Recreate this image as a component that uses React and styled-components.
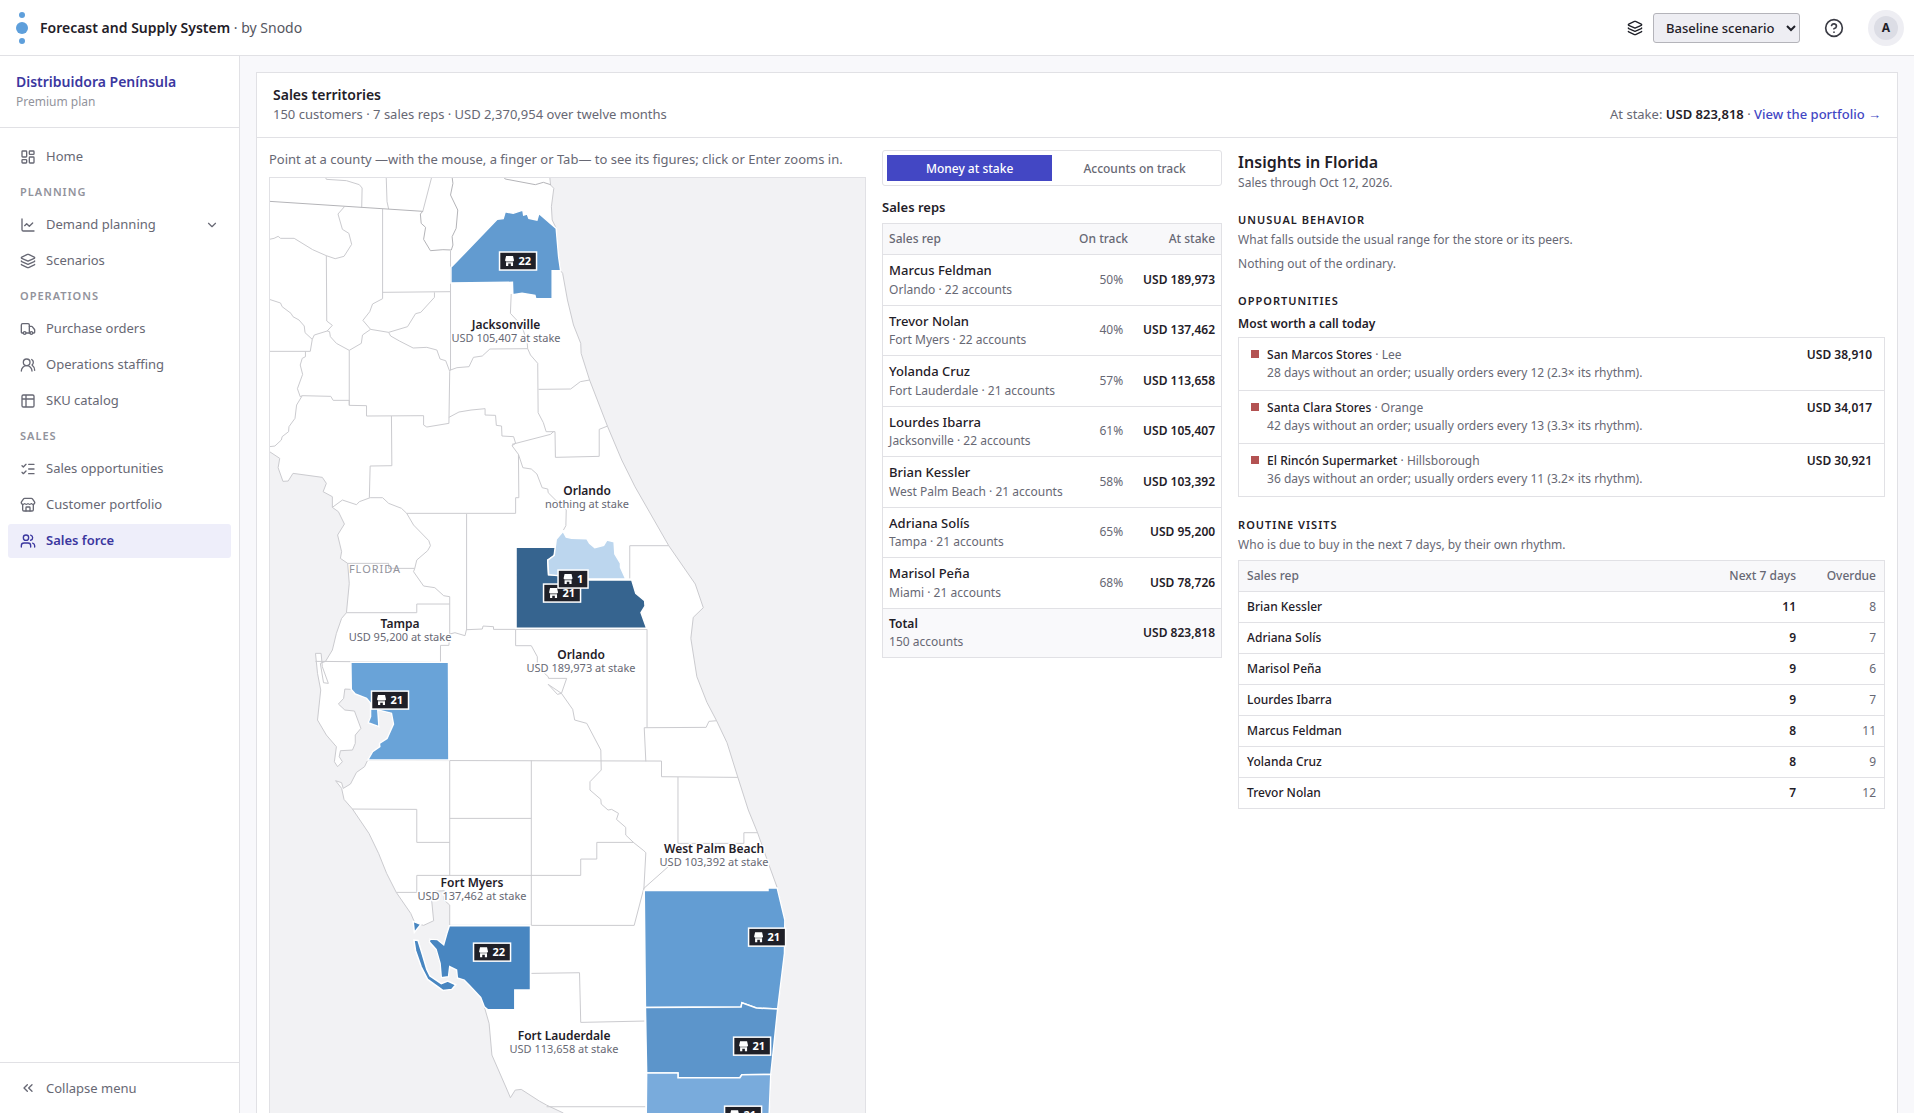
import React, { useState } from 'react'

import styled, { createGlobalStyle } from 'styled-components'

import {
  ChartLine,
  ChevronDown,
  ChevronsLeft,
  CircleQuestionMark,
  Layers,
  LayoutDashboard,
  ListChecks,
  Store,
  Truck,
  Users,
  UsersRound,
} from 'lucide-react'

const ink = '#1f2028'
const muted = '#676874'
const faint = '#92939c'
const line = '#e1e1e5'
const accent = '#4347c4'
const accentDark = '#3b379f'

const GlobalStyle = createGlobalStyle`
  * {
    box-sizing: border-box;
  }

  body {
    margin: 0;
    background: #f8f8fb;
    color: ${ink};
    font-family: "Noto Sans", "Open Sans", sans-serif;
    font-size: 13px;
    line-height: 1.5;
  }

  button, select {
    font-family: inherit;
  }

  h1, h2, h3, h4, p, ul {
    margin: 0;
    padding: 0;
  }
`

const Shell = styled.div`
  display: flex;
  flex-direction: column;
  height: 100vh;
  overflow: hidden;
`

const Topbar = styled.header`
  display: flex;
  align-items: center;
  justify-content: space-between;
  flex: none;
  height: 56px;
  padding: 0 10px 0 16px;
  background: #ffffff;
  border-bottom: 1px solid ${line};
`

const Brand = styled.div`
  display: flex;
  align-items: center;
  gap: 12px;
  font-size: 14px;
  color: #55565f;

  strong {
    font-weight: 600;
    color: ${ink};
  }
`

const TopActions = styled.div`
  display: flex;
  align-items: center;
  gap: 16px;
`

const ScenarioField = styled.label`
  display: flex;
  align-items: center;
  gap: 10px;
`

const ScenarioSelect = styled.select`
  height: 30px;
  width: 147px;
  padding: 0 0 0 8px;
  background: #eeeef3;
  color: ${ink};
  border: 1px solid #b4b4ba;
  border-radius: 3px;
  font-size: 13px;
  font-weight: 500;
`

const RoundButton = styled.button`
  display: flex;
  align-items: center;
  justify-content: center;
  width: 36px;
  height: 36px;
  padding: 0;
  border: none;
  border-radius: 50%;
  background: ${props => (props.$filled ? '#eeeef3' : 'none')};
  color: #3b3c45;
  cursor: pointer;
`

const Initial = styled.span`
  width: 24px;
  height: 24px;
  border-radius: 50%;
  background: #dcdde5;
  color: ${ink};
  font-size: 12px;
  font-weight: 700;
  line-height: 24px;
`

const Body = styled.div`
  display: flex;
  flex: 1;
  min-height: 0;
`

const Sidebar = styled.aside`
  display: flex;
  flex-direction: column;
  flex: none;
  width: 240px;
  background: #ffffff;
  border-right: 1px solid ${line};
`

const Account = styled.div`
  padding: 16px;
  border-bottom: 1px solid ${line};
`

const AccountName = styled.p`
  margin-bottom: 2px;
  font-size: 14px;
  font-weight: 600;
  line-height: 19px;
  color: ${accentDark};
`

const AccountPlan = styled.p`
  font-size: 12px;
  color: ${faint};
`

const Nav = styled.nav`
  display: flex;
  flex-direction: column;
  flex: 1;
  gap: 2px;
  padding: 12px 8px;
`

const NavHeading = styled.h4`
  padding: 8px 12px 6px;
  font-size: 11px;
  font-weight: 600;
  line-height: 16px;
  letter-spacing: 1px;
  text-transform: uppercase;
  color: ${faint};
`

const NavLink = styled.a`
  display: flex;
  align-items: center;
  gap: 10px;
  height: 34px;
  padding: 0 12px;
  border-radius: 3px;
  text-decoration: none;
  font-weight: ${props => (props.$active ? 600 : 400)};
  color: ${props => (props.$active ? accentDark : muted)};
  background: ${props => (props.$active ? '#eeeefa' : 'none')};

  span {
    flex: 1;
  }
`

const SidebarFooter = styled.div`
  padding: 8px;
  border-top: 1px solid ${line};
`

const CollapseButton = styled.button`
  display: flex;
  align-items: center;
  gap: 10px;
  width: 100%;
  height: 34px;
  padding: 0 12px;
  border: none;
  background: none;
  font-size: 13px;
  color: ${muted};
  cursor: pointer;
`

const Main = styled.main`
  flex: 1;
  min-width: 0;
  padding: 16px;
  overflow-y: auto;
  scrollbar-width: none;
`

const Panel = styled.section`
  background: #ffffff;
  border: 1px solid ${line};
`

const PanelHeader = styled.div`
  display: flex;
  align-items: flex-end;
  justify-content: space-between;
  padding: 12px 16px 14px;
  border-bottom: 1px solid ${line};
  line-height: 18px;
  color: ${muted};
`

const PanelTitle = styled.h1`
  font-size: 14px;
  font-weight: 600;
  line-height: 20px;
  color: ${ink};
`

const Stake = styled.p`
  strong {
    font-weight: 600;
    color: ${ink};
  }

  a {
    font-weight: 500;
    color: ${accent};
    text-decoration: none;
  }
`

const Columns = styled.div`
  display: grid;
  grid-template-columns: minmax(0, 12fr) 340px minmax(0, 13fr);
  gap: 16px;
  align-items: start;
  padding: 12px;
`

const MapHint = styled.p`
  margin-bottom: 8px;
  line-height: 19px;
  color: ${muted};
`

const MapFrame = styled.div`
  border: 1px solid ${line};
  background: #f2f2f4;

  svg {
    display: block;
    width: 100%;
    height: auto;
  }
`

const Counties = styled.g`
  fill: none;
  stroke: #cbcbcf;
  stroke-width: 1px;

  path {
    vector-effect: non-scaling-stroke;
  }
`

const Land = styled.path`
  fill: #ffffff;
`

const StateLine = styled.path`
  stroke: #b4b4b8;
`

const Territory = styled.path`
  fill: ${props => props.$tone};
  stroke: #ffffff;
  stroke-width: 1.5px;
`

const StateName = styled.text`
  font-size: 11px;
  letter-spacing: 1px;
  text-anchor: middle;
  fill: #92939c;
`

const PlaceName = styled.text`
  font-size: 12px;
  font-weight: 600;
  text-anchor: middle;
  fill: ${ink};
  stroke: #ffffff;
  stroke-width: 3px;
  stroke-linejoin: round;
  paint-order: stroke;
`

const PlaceStake = styled(PlaceName)`
  font-size: 11px;
  font-weight: 400;
  fill: ${muted};
`

const MarkerBox = styled.rect`
  fill: ${ink};
  stroke: #ffffff;
  stroke-width: 1.5px;
`

const MarkerCount = styled.text`
  font-size: 11px;
  font-weight: 700;
  fill: #ffffff;
`

const Toggle = styled.div`
  display: grid;
  grid-template-columns: 1fr 1fr;
  margin-bottom: 12px;
  padding: 4px;
  border: 1px solid ${line};
  border-radius: 3px;
`

const ToggleButton = styled.button`
  height: 26px;
  padding: 0;
  border: none;
  background: ${props => (props.$active ? accent : 'none')};
  color: ${props => (props.$active ? '#ffffff' : muted)};
  font-size: 12px;
  font-weight: 500;
  cursor: pointer;
`

const RepsTitle = styled.h2`
  margin-bottom: 6px;
  font-size: 13px;
  font-weight: 600;
  line-height: 19px;
`

const Table = styled.table`
  width: 100%;
  table-layout: fixed;
  border: 1px solid ${line};
  border-spacing: 0;
  font-size: 12px;

  th, td {
    padding: 6px ${props => props.$pad}px;
    text-align: left;
    font-weight: 400;
    white-space: nowrap;
  }

  tr > * + * {
    text-align: right;
  }

  thead th {
    background: #f8f8fa;
    color: ${muted};
    font-weight: 500;
  }

  tbody th, tbody td, tfoot th, tfoot td {
    border-top: 1px solid ${line};
  }

  tbody th {
    font-weight: 500;
  }

  tfoot th, tfoot td {
    background: #f9f9fb;
  }
`

const Column = styled.col`
  width: ${props => props.$width}px;
`

const RepName = styled.div`
  font-size: ${props => (props.$total ? 12 : 13)}px;
  font-weight: ${props => (props.$total ? 600 : 500)};
  color: ${ink};
`

const RepDetail = styled.div`
  font-weight: 400;
  color: ${muted};
`

const QuietCell = styled.td`
  color: ${muted};
`

const StrongCell = styled.td`
  && {
    font-weight: 600;
  }
`

const InsightsTitle = styled.h2`
  font-size: 16px;
  font-weight: 600;
`

const Note = styled.p`
  font-size: 12px;
  color: ${muted};
`

const InsightBlock = styled.section`
  display: flex;
  flex-direction: column;
  margin-top: 20px;

  h3 {
    margin-bottom: 2px;
    font-size: 11px;
    font-weight: 600;
    letter-spacing: 1px;
    text-transform: uppercase;
  }

  h4 {
    margin: 4px 0;
    font-size: 12px;
    font-weight: 600;
  }

  ${Note} + ${Note}, ${Table} {
    margin-top: 6px;
  }
`

const CallList = styled.ul`
  list-style: none;
  border: 1px solid ${line};
  font-size: 12px;
`

const Call = styled.li`
  display: flex;
  gap: 8px;
  padding: 8px 12px;
  color: ${muted};

  & + & {
    border-top: 1px solid ${line};
  }

  strong {
    font-weight: 500;
    color: ${ink};
  }
`

const CallDot = styled.span`
  width: 8px;
  height: 8px;
  margin-top: 4px;
  background: #b35252;
`

const CallText = styled.div`
  flex: 1;
`

const CallAmount = styled.span`
  font-weight: 600;
  color: ${ink};
`

const reps = [
  { name: 'Marcus Feldman', city: 'Orlando', accounts: 22, onTrack: 50, stake: '189,973' },
  { name: 'Trevor Nolan', city: 'Fort Myers', accounts: 22, onTrack: 40, stake: '137,462' },
  { name: 'Yolanda Cruz', city: 'Fort Lauderdale', accounts: 21, onTrack: 57, stake: '113,658' },
  { name: 'Lourdes Ibarra', city: 'Jacksonville', accounts: 22, onTrack: 61, stake: '105,407' },
  { name: 'Brian Kessler', city: 'West Palm Beach', accounts: 21, onTrack: 58, stake: '103,392' },
  { name: 'Adriana Solís', city: 'Tampa', accounts: 21, onTrack: 65, stake: '95,200' },
  { name: 'Marisol Peña', city: 'Miami', accounts: 21, onTrack: 68, stake: '78,726' },
]

const calls = [
  { store: 'San Marcos Stores', county: 'Lee', days: 28, every: 12, ratio: '2.3', stake: '38,910' },
  { store: 'Santa Clara Stores', county: 'Orange', days: 42, every: 13, ratio: '3.3', stake: '34,017' },
  { store: 'El Rincón Supermarket', county: 'Hillsborough', days: 36, every: 11, ratio: '3.2', stake: '30,921' },
]

const visits = [
  ['Brian Kessler', 11, 8],
  ['Adriana Solís', 9, 7],
  ['Marisol Peña', 9, 6],
  ['Lourdes Ibarra', 9, 7],
  ['Marcus Feldman', 8, 11],
  ['Yolanda Cruz', 8, 9],
  ['Trevor Nolan', 7, 12],
]

// Map outlines, in survey units (see the transform on <Counties>)
const land =
  'M30 100L746 142L748 165L756 175L750 230L752 270L762 295L768 380L773 422L778 430L790 510L805 585L823 640L824 670L845 750L890 890L925 990L958 1070L1042 1247L1108 1362L1128 1433L1103 1462L1097 1525L1112 1640L1137 1717L1161 1772L1187 1838L1214 1942L1240 2040L1263 2108L1290 2200L1312 2273L1331 2370L1330 2470L1313 2635L1296 2833L1292 2949L1285 3200L800 3200L780 2949L738 2925L720 2913L675 2878L660 2880L648 2903L640 2880L602 2775L595 2680L585 2638L574 2602L545 2565L533 2550L516 2544L514 2520L497 2510L494 2540L476 2543L473 2500L463 2458L446 2435L448 2427L466 2428L482 2444L497 2386L497 2325L483 2310L484 2282L455 2284L452 2310L457 2372L432 2386L410 2378L400 2350L364 2287L340 2230L320 2170L296 2110L255 2037L234 2008L228 1975L213 1952L228 1958L232 1975L250 1962L265 1927L285 1910L293 1890L305 1865L323 1850L322 1840L341 1825L357 1782L352 1750L318 1740L321 1790L294 1778L300 1760L300 1720L290 1705L262 1692L252 1678L236 1677L233 1705L220 1722L236 1740L260 1743L276 1795L262 1815L262 1840L255 1860L225 1862L222 1880L230 1895L218 1910L210 1895L215 1850L190 1815L168 1770L176 1680L168 1630L163 1570L177 1570L180 1610L195 1660L183 1658L175 1600L188 1594L205 1560L215 1510L228 1465L240 1448L247 1360L243 1300L225 1285L228 1265L218 1215L235 1182L220 1145L205 1132L205 1100L182 1085L190 1060L180 1042L107 1030L95 1053L82 1054L70 1013L74 985L30 950Z'

const stateLine =
  'M48 214L430 244L424 252L426 280L437 292L432 328L449 362L480 359L501 360L505 345L503 320L513 295L517 240L499 195L505 160L503 142M632 142L635 147L710 164L730 157L748 164'

const countyLines = [
  'M188 142L190 148L240 152L272 164L279 174L278 232M339 142L341 215L345 237M452 142L430 244',
  'M235 230L219 252L230 298L246 310L253 343L234 379L212 386L190 377L156 359L110 325L76 325L70 319L60 325L48 328',
  'M190 377L191 573L205 586L192 603M330 237L330 506L305 522L298 545L281 571L300 598M330 487L498 485',
  'M459 487L459 502L425 547L412 551L392 590L345 607L300 598L280 615L277 640L247 661L215 640L200 620L198 605L192 603L160 615L155 628L150 664L48 664',
  'M48 508L76 519L80 530L102 550L107 560L122 570L135 588L137 608L155 628M499 362V722',
  'M499 720L515 713L545 710L556 682L578 678L597 657L691 656L698 675L716 700L717 848L730 878L737 905L757 905',
  'M345 607L350 618L372 633L406 654L440 652L465 660L473 687L487 692L497 724L495 880L440 891L432 885V857L290 858V827L247 826V811L207 811L201 799L130 797L125 800L118 776L131 733L125 705L130 685L138 680V664M247 661V826',
  'M130 797L116 825L112 865L97 890L96 905L80 920L78 930L62 948L48 950M352 858L353 1007L299 1008L297 1103',
  'M495 862L520 846L550 840L585 836V855L611 856L613 886L626 888L627 918L656 920L661 940L652 947L668 973L669 1103H661V1150H390',
  'M652 943L748 913L755 905L759 905L760 982L869 979V898L890 888M718 778L798 777L822 755L845 750M650 492L648 550L665 572L680 600L690 640L691 656',
  'M668 973L679 1013L700 1017L714 1032L727 1073L741 1077L742 1088L762 1112L775 1120L787 1140L786 1187L780 1200',
  'M205 1132L230 1110L265 1124L272 1115L299 1103H330L345 1120L377 1135L390 1150L407 1185L445 1232L449 1247L442 1262L415 1290L410 1315H345V1300H243',
  'M410 1315L407 1325L432 1368L460 1373L482 1397L497 1400V1512L510 1508L535 1517L539 1497V1152M240 1448H415V1422H497M497 1510L495 1546H474V1597L163 1594',
  'M539 1499L578 1497L580 1488L606 1490V1498H661V1547H700L715 1580V1610L742 1640L743 1645H788L775 1690L742 1663L765 1693L775 1690L803 1738L808 1770L838 1780L873 1860L874 1920L846 1955V1980L873 2008L874 2022L891 2040L900 2038L917 2050L912 2068L935 2092V2115L955 2138L980 2162L985 2168L980 2280',
  'M661 1498H988V1792M945 1345V1247H1042M981 1793L1135 1792L1142 1774L1161 1772M981 1793L985 1894',
  'M293 1891L1024 1893V1940L1214 1942M1065 1941V2140H1229V2108H1263M497 1891V2237M700 1891V2385M497 2065H700',
  'M255 2037L415 2038V2137H497M364 2287H415V2236H823V2187H863V2137H955M497 2386H956L980 2275L1050 2200M700 2530L820 2528L823 2677L981 2673M738 2930H984',
]

const territories = [
  { county: 'Duval', tone: '#629bd0', d: 'M500 412L615 268L630 266L635 245L655 250L679 240L681 255L690 252L694 265L714 270L719 250L762 295L768 380L773 422H752V506H711L709 496L677 490L654 494L653 457L500 459Z' },
  { county: 'Orange', tone: '#36648f', d: 'M662 1252H762L757 1278L741 1290L743 1334L843 1336V1350H950L960 1390L982 1412L983 1428L973 1448L987 1495H662Z' },
  { county: 'Seminole', tone: '#bcd6ee', d: 'M762 1228L779 1204L787 1221L800 1225L838 1226L845 1240L858 1253L880 1246L888 1230L906 1235L908 1272L922 1300V1312L935 1347H845L743 1334L741 1290L757 1276Z' },
  { county: 'Hillsborough', tone: '#69a3d8', d: 'M251 1597H494L495 1890H293L305 1865L323 1850L322 1840L341 1825L357 1782L352 1750L318 1740L321 1790L294 1778L300 1760V1720L290 1705L262 1692L252 1678Z' },
  { county: 'Lee', tone: '#4886c1', d: 'M496 2387H698V2580H659V2639H592L583 2630L574 2602L545 2565L533 2550L516 2544L514 2520L497 2510L494 2540L476 2543L473 2500L463 2458L446 2435L448 2427L466 2428L482 2444L490 2410ZM408 2430L418 2431L428 2470L440 2518L448 2538L476 2561L492 2553L512 2564L502 2578L480 2581L442 2548L426 2510L412 2462ZM406 2374L425 2383L409 2407Z' },
  { county: 'Palm Beach', tone: '#639dd3', d: 'M981 2281H1289V2274H1312L1331 2370L1330 2470L1313 2637L1260 2634L1224 2618L1222 2631L984 2632Z' },
  { county: 'Broward', tone: '#5c95cb', d: 'M984 2632L1222 2631L1224 2618L1260 2634L1313 2637L1296 2833L1224 2834L1219 2843H1065V2829H987Z' },
  { county: 'Miami-Dade', tone: '#79abdc', d: 'M987 2829H1065V2843H1219L1224 2834L1296 2833L1292 2949L1285 3200H984Z' },
]

const places = [
  { name: 'Jacksonville', stake: 'USD 105,407 at stake', x: 236, y: 151 },
  { name: 'Orlando', stake: 'nothing at stake', x: 317, y: 317 },
  { name: 'Orlando', stake: 'USD 189,973 at stake', x: 311, y: 481 },
  { name: 'Tampa', stake: 'USD 95,200 at stake', x: 130, y: 450 },
  { name: 'West Palm Beach', stake: 'USD 103,392 at stake', x: 444, y: 675 },
  { name: 'Fort Myers', stake: 'USD 137,462 at stake', x: 202, y: 709 },
  { name: 'Fort Lauderdale', stake: 'USD 113,658 at stake', x: 294, y: 862 },
]

const markers = [
  { count: 22, x: 248, y: 83 },
  { count: 21, x: 292, y: 415 },
  { count: 1, x: 303, y: 401 },
  { count: 21, x: 120, y: 522 },
  { count: 22, x: 222, y: 774 },
  { count: 21, x: 497, y: 759 },
  { count: 21, x: 482, y: 868 },
  { count: 21, x: 473, y: 937 },
]

function CatalogIcon() {
  return (
    <svg width="16" height="16" viewBox="0 0 24 24" fill="none" stroke="currentColor" strokeWidth="2" strokeLinejoin="round">
      <rect x="3" y="3" width="18" height="18" rx="2" />
      <path d="M3 9h18M9 3v18" />
    </svg>
  )
}

const sections = [
  { links: [{ label: 'Home', icon: LayoutDashboard }] },
  {
    title: 'Planning',
    links: [
      { label: 'Demand planning', icon: ChartLine, opens: true },
      { label: 'Scenarios', icon: Layers },
    ],
  },
  {
    title: 'Operations',
    links: [
      { label: 'Purchase orders', icon: Truck },
      { label: 'Operations staffing', icon: UsersRound },
      { label: 'SKU catalog', icon: CatalogIcon },
    ],
  },
  {
    title: 'Sales',
    links: [
      { label: 'Sales opportunities', icon: ListChecks },
      { label: 'Customer portfolio', icon: Store },
      { label: 'Sales force', icon: Users, active: true },
    ],
  },
]

function Marker({ count, x, y }) {
  const width = count > 9 ? 37 : 30
  const left = x - width / 2

  return (
    <g>
      <MarkerBox x={left} y={y - 9} width={width} height={18} />
      <path
        transform={`translate(${left + 5} ${y - 5})`}
        fill="#ffffff"
        d="M1.500 0H8.500L9.500 4.500L8.500 5.500H1.500L.5 4.500ZM1.500 6.200H8.500V10H6.300V7.600H3.700V10H1.500Z"
      />
      <MarkerCount x={left + 19} y={y + 4}>{count}</MarkerCount>
    </g>
  )
}

function TerritoryMap() {
  return (
    <MapFrame>
      <svg viewBox="0 0 595 992" role="img" aria-label="Sales territories in Florida">
        <Counties transform="scale(0.4018 0.3333) translate(-49.8 -144)">
          <Land d={land} />
          {countyLines.map((d, i) => <path key={i} d={d} />)}
          <StateLine d={stateLine} />
          {territories.map(t => <Territory key={t.county} $tone={t.tone} d={t.d} />)}
        </Counties>
        <StateName x="105" y="395">FLORIDA</StateName>
        {markers.map((m, i) => <Marker key={i} {...m} />)}
        {places.map((p, i) => (
          <g key={i}>
            <PlaceName x={p.x} y={p.y}>{p.name}</PlaceName>
            <PlaceStake x={p.x} y={p.y + 13}>{p.stake}</PlaceStake>
          </g>
        ))}
      </svg>
    </MapFrame>
  )
}

function RepsTable() {
  return (
    <Table $pad={6}>
      <colgroup>
        <col />
        <Column $width={56} />
        <Column $width={92} />
      </colgroup>
      <thead>
        <tr>
          <th scope="col">Sales rep</th>
          <th scope="col">On track</th>
          <th scope="col">At stake</th>
        </tr>
      </thead>
      <tbody>
        {reps.map(rep => (
          <tr key={rep.name}>
            <th scope="row">
              <RepName>{rep.name}</RepName>
              <RepDetail>{rep.city} · {rep.accounts} accounts</RepDetail>
            </th>
            <QuietCell>{rep.onTrack}%</QuietCell>
            <StrongCell>USD {rep.stake}</StrongCell>
          </tr>
        ))}
      </tbody>
      <tfoot>
        <tr>
          <th scope="row">
            <RepName $total>Total</RepName>
            <RepDetail>150 accounts</RepDetail>
          </th>
          <td></td>
          <StrongCell>USD 823,818</StrongCell>
        </tr>
      </tfoot>
    </Table>
  )
}

function Insights() {
  return (
    <div>
      <InsightsTitle>Insights in Florida</InsightsTitle>
      <Note>Sales through Oct 12, 2026.</Note>

      <InsightBlock>
        <h3>Unusual behavior</h3>
        <Note>What falls outside the usual range for the store or its peers.</Note>
        <Note>Nothing out of the ordinary.</Note>
      </InsightBlock>

      <InsightBlock>
        <h3>Opportunities</h3>
        <h4>Most worth a call today</h4>
        <CallList>
          {calls.map(call => (
            <Call key={call.store}>
              <CallDot />
              <CallText>
                <p><strong>{call.store}</strong> · {call.county}</p>
                <p>{call.days} days without an order; usually orders every {call.every} ({call.ratio}× its rhythm).</p>
              </CallText>
              <CallAmount>USD {call.stake}</CallAmount>
            </Call>
          ))}
        </CallList>
      </InsightBlock>

      <InsightBlock>
        <h3>Routine visits</h3>
        <Note>Who is due to buy in the next 7 days, by their own rhythm.</Note>
        <Table $pad={8}>
          <colgroup>
            <col />
            <Column $width={120} />
            <Column $width={80} />
          </colgroup>
          <thead>
            <tr>
              <th scope="col">Sales rep</th>
              <th scope="col">Next 7 days</th>
              <th scope="col">Overdue</th>
            </tr>
          </thead>
          <tbody>
            {visits.map(([name, next, overdue]) => (
              <tr key={name}>
                <th scope="row">{name}</th>
                <StrongCell>{next}</StrongCell>
                <QuietCell>{overdue}</QuietCell>
              </tr>
            ))}
          </tbody>
        </Table>
      </InsightBlock>
    </div>
  )
}

export default function App() {
  const [metric, setMetric] = useState('money')

  return (
    <Shell>
      <GlobalStyle />
      <Topbar>
        <Brand>
          <svg width="12" height="32" viewBox="0 0 12 32" fill="#5e9fdb">
            <circle cx="6" cy="3" r="3" />
            <circle cx="6" cy="16" r="6" />
            <circle cx="6" cy="29" r="3" />
          </svg>
          <span><strong>Forecast and Supply System</strong> · by Snodo</span>
        </Brand>
        <TopActions>
          <ScenarioField>
            <Layers size={16} />
            <ScenarioSelect aria-label="Scenario">
              <option>Baseline scenario</option>
            </ScenarioSelect>
          </ScenarioField>
          <RoundButton aria-label="Help"><CircleQuestionMark size={20} /></RoundButton>
          <RoundButton $filled aria-label="Account"><Initial>A</Initial></RoundButton>
        </TopActions>
      </Topbar>

      <Body>
        <Sidebar>
          <Account>
            <AccountName>Distribuidora Península</AccountName>
            <AccountPlan>Premium plan</AccountPlan>
          </Account>
          <Nav>
            {sections.map((section, i) => (
              <React.Fragment key={i}>
                {section.title && <NavHeading>{section.title}</NavHeading>}
                {section.links.map(({ label, icon: Icon, active, opens }) => (
                  <NavLink key={label} href="#" $active={active}>
                    <Icon size={16} />
                    <span>{label}</span>
                    {opens && <ChevronDown size={14} />}
                  </NavLink>
                ))}
              </React.Fragment>
            ))}
          </Nav>
          <SidebarFooter>
            <CollapseButton><ChevronsLeft size={16} />Collapse menu</CollapseButton>
          </SidebarFooter>
        </Sidebar>

        <Main>
          <Panel>
            <PanelHeader>
              <div>
                <PanelTitle>Sales territories</PanelTitle>
                <p>150 customers · 7 sales reps · USD 2,370,954 over twelve months</p>
              </div>
              <Stake>At stake: <strong>USD 823,818</strong> · <a href="#">View the portfolio →</a></Stake>
            </PanelHeader>
            <Columns>
              <div>
                <MapHint>Point at a county —with the mouse, a finger or Tab— to see its figures; click or Enter zooms in.</MapHint>
                <TerritoryMap />
              </div>
              <div>
                <Toggle>
                  <ToggleButton $active={metric === 'money'} onClick={() => setMetric('money')}>Money at stake</ToggleButton>
                  <ToggleButton $active={metric === 'track'} onClick={() => setMetric('track')}>Accounts on track</ToggleButton>
                </Toggle>
                <RepsTitle>Sales reps</RepsTitle>
                <RepsTable />
              </div>
              <Insights />
            </Columns>
          </Panel>
        </Main>
      </Body>
    </Shell>
  )
}
